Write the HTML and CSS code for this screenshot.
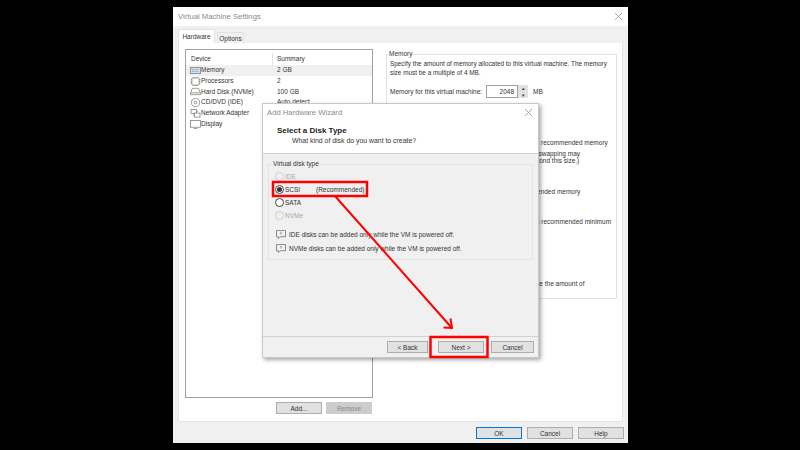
FILE: index.html
```html
<!DOCTYPE html>
<html lang="en">
  <head>
    <meta charset="UTF-8" />
    <title>Add Hardware Wizard</title>
    <link rel="stylesheet" href="styles.css">
  </head>
  <body>
    <div class="window">
      <header class="titlebar">
        <span>Virtual Machine Settings</span>
        <svg class="close" viewBox="0 0 8 8"><path d="M0 0L8 8M8 0L0 8" /></svg>
      </header>
      <nav class="tabs">
        <button class="tab valgt">Hardware</button>
        <button class="tab">Options</button>
      </nav>

      <main class="panel">
        <section class="devices">
          <div class="list">
            <div class="row head"><span class="col-device">Device</span><span class="col-sum">Summary</span></div>
            <div class="row valgt">
              <span class="col-device">
                <svg class="ico" viewBox="0 0 12 10"><rect x="0.5" y="1.5" width="11" height="7" fill="#cfe0f2" /><path d="M2 4h8M2 6h8" stroke-dasharray="1 1" /></svg>Memory
              </span>
              <span class="col-sum">2 GB</span>
            </div>
            <div class="row">
              <span class="col-device">
                <svg class="ico" viewBox="0 0 12 10"><rect x="2" y="1" width="8" height="8" rx="1" /><path d="M0.500 3h1.500M0.500 5h1.500M0.500 7h1.500M10 3h1.500M10 5h1.500M10 7h1.500M4 0v1M6 0v1M8 0v1M4 9v1M6 9v1M8 9v1" /></svg>Processors
              </span>
              <span class="col-sum">2</span>
            </div>
            <div class="row">
              <span class="col-device">
                <svg class="ico" viewBox="0 0 12 10"><path d="M2.500 1.500h7l2 5v2h-11v-2zM0.500 6.500h11" /></svg>Hard Disk (NVMe)
              </span>
              <span class="col-sum">100 GB</span>
            </div>
            <div class="row">
              <span class="col-device">
                <svg class="ico" viewBox="0 0 12 10"><circle cx="6" cy="5" r="4.500" /><circle cx="6" cy="5" r="1.500" /></svg>CD/DVD (IDE)
              </span>
              <span class="col-sum">Auto detect</span>
            </div>
            <div class="row">
              <span class="col-device">
                <svg class="ico" viewBox="0 0 12 10"><rect x="1" y="0.500" width="6" height="4.500" /><rect x="5" y="4.500" width="6" height="4.500" fill="#fff" /><path d="M3 7h2M9 2.500H7" /></svg>Network Adapter
              </span>
              <span class="col-sum"></span>
            </div>
            <div class="row">
              <span class="col-device">
                <svg class="ico" viewBox="0 0 12 10"><rect x="0.500" y="0.500" width="11" height="7.500" /><path d="M4 9.500h4" /></svg>Display
              </span>
              <span class="col-sum"></span>
            </div>
          </div>
          <div class="list-buttons">
            <button class="knap">Add...</button>
            <button class="knap off">Remove</button>
          </div>
        </section>

        <fieldset class="memory">
          <legend>Memory</legend>
          <p class="intro">Specify the amount of memory allocated to this virtual machine. The memory size must be a multiple of 4 MB.</p>
          <div class="amount">
            <span class="amount-label">Memory for this virtual machine:</span>
            <span class="spin-input">2048</span>
            <span class="spin"><i>▴</i><i>▾</i></span>
            <span class="unit">MB</span>
          </div>
          <div class="notes">
            <p class="note-max">Maximum recommended memory</p>
            <p class="note-swap">(Memory swapping may<br />occur beyond this size.)</p>
            <p class="note-rec">Recommended memory</p>
            <p class="note-min">Guest OS recommended minimum</p>
            <p class="note-end">You can reduce the amount of</p>
          </div>
        </fieldset>
      </main>

      <footer class="footer">
        <button class="knap primary">OK</button>
        <button class="knap">Cancel</button>
        <button class="knap">Help</button>
      </footer>

      <!-- wizard ligger oven paa settings vinduet -->
      <div class="wizard">
        <header class="wiz-title">
          <span>Add Hardware Wizard</span>
          <svg class="close" viewBox="0 0 8 8"><path d="M0 0L8 8M8 0L0 8" /></svg>
        </header>
        <div class="wiz-head">
          <h1>Select a Disk Type</h1>
          <p>What kind of disk do you want to create?</p>
        </div>
        <div class="wiz-body">
          <fieldset class="disk-type">
            <legend>Virtual disk type</legend>
            <div class="radio off"><span class="dot"></span>IDE</div>
            <div class="radio"><span class="dot on"></span><span class="radio-name">SCSI</span>(Recommended)</div>
            <div class="radio"><span class="dot"></span>SATA</div>
            <div class="radio off"><span class="dot"></span>NVMe</div>
            <div class="info">
              <svg class="info-ico" viewBox="0 0 11 10"><path d="M0.500 0.500h10v7h-6l-2 2v-2h-2z" /><path d="M5.500 2v3" /></svg>
              IDE disks can be added only while the VM is powered off.
            </div>
            <div class="info">
              <svg class="info-ico" viewBox="0 0 11 10"><path d="M0.500 0.500h10v7h-6l-2 2v-2h-2z" /><path d="M5.500 2v3" /></svg>
              NVMe disks can be added only while the VM is powered off.
            </div>
          </fieldset>
        </div>
        <div class="wiz-foot">
          <button class="knap back">&lt; Back</button>
          <button class="knap next">Next &gt;</button>
          <button class="knap cancel">Cancel</button>
        </div>
      </div>
    </div>

    <!-- roede markeringer -->
    <svg class="marks" viewBox="0 0 800 450">
      <rect class="box" x="273" y="182" width="94" height="14" />
      <rect class="box" x="430.500" y="337" width="57" height="20" />
      <path d="M335 196L451 327" />
      <path d="M443.500 327.500L452 328L450.500 318.500" />
    </svg>
  </body>
</html>
```

FILE: styles.css
```css
* {
  box-sizing: border-box;
}
body {
  margin: 0;
  width: 800px;
  height: 450px;
  padding: 7px 172px 7px 173px;
  background-color: #000;
  font-family: "Liberation Sans", Arial, sans-serif;
  font-size: 6.5px;
  line-height: 9px;
  color: #333;
  overflow: hidden;
}
p {
  margin: 0;
}
button {
  font: inherit;
  color: inherit;
  padding: 0;
}
.window {
  position: relative;
  height: 436px;
  display: flex;
  flex-direction: column;
  background-color: #f0f0f0;
}
.titlebar {
  height: 19px;
  flex: none;
  display: flex;
  align-items: center;
  justify-content: space-between;
  padding: 0 6px 0 5px;
  background-color: #fff;
  color: #8a8a8a;
  font-size: 7.7px;
}
.close {
  width: 7px;
  height: 7px;
  stroke: #888;
  stroke-width: 0.8;
  fill: none;
}
.tabs {
  height: 17px;
  flex: none;
  display: flex;
  align-items: flex-end;
  padding-left: 5px;
}
.tab {
  width: 27px;
  height: 11px;
  margin-left: 2px;
  border: 1px solid #e2e2e2;
  border-bottom: 0;
  background-color: #f0f0f0;
}
.tab.valgt {
  width: 37px;
  height: 14px;
  margin-left: 0;
  background-color: #fff;
}
.panel {
  height: 379px;
  flex: none;
  margin: 0 5px;
  padding: 6px 6px 0 6px;
  display: flex;
  gap: 13px;
  background-color: #fff;
  border: 1px solid #e4e4e4;
  border-width: 0 1px 1px;
}
.devices {
  width: 188px;
  flex: none;
}
.list {
  height: 349px;
  padding-top: 3px;
  border: 1px solid #a0a0a0;
}
.row {
  display: flex;
  height: 10.8px;
  line-height: 10.8px;
  padding-left: 4px;
  white-space: nowrap;
}
.row.head {
  height: 12px;
  line-height: 12px;
}
.row.valgt {
  background-color: #f0f0f0;
}
.col-device {
  width: 83px;
  flex: none;
  display: flex;
  align-items: center;
}
.head .col-device {
  padding-left: 1px;
  border-right: 1px solid #e5e5e5;
}
.col-sum {
  padding-left: 4px;
}
.ico {
  width: 11px;
  height: 9px;
  flex: none;
  fill: none;
  stroke: #777;
  stroke-width: 0.8;
}
.list-buttons {
  display: flex;
  justify-content: flex-end;
  gap: 4px;
  margin-top: 4px;
  padding-right: 1px;
}
.knap {
  width: 46px;
  height: 12px;
  line-height: 9px;
  background-color: #e1e1e1;
  border: 1px solid #adadad;
}
.knap.off {
  background-color: #ccc;
  border-color: #ccc;
  color: #888;
}
.knap.primary {
  border-color: #0078d7;
}
.memory {
  width: 231px;
  height: 248px;
  flex: none;
  margin: 2px 0 0;
  padding: 3px 3px 0;
  border: 1px solid #e2e2e2;
  min-width: 0;
}
.memory legend {
  padding: 0 1px;
  margin-left: -2px;
  line-height: 6px;
}
.intro {
  font-size: 6.4px;
  line-height: 8.5px;
}
.amount {
  display: flex;
  align-items: center;
  margin-top: 8px;
  height: 13px;
  white-space: nowrap;
}
.amount-label {
  width: 96px;
  flex: none;
}
.spin-input {
  width: 32px;
  height: 13px;
  line-height: 11px;
  text-align: right;
  padding-right: 3px;
  border: 1px solid #a0a0a0;
}
.spin {
  width: 10px;
  height: 13px;
  display: flex;
  flex-direction: column;
  background-color: #e1e1e1;
  font-size: 5px;
  line-height: 6.5px;
  text-align: center;
}
.spin i {
  font-style: normal;
}
.unit {
  margin-left: 5px;
}
.notes {
  margin: 40px 0 0 121px;
  white-space: nowrap;
}
.note-swap {
  margin-top: 3px;
  line-height: 7px;
}
.note-rec {
  margin-top: 23px;
}
.note-min {
  margin-top: 21px;
}
.note-end {
  margin: 53px 0 0 -13px;
}
.footer {
  flex: 1;
  display: flex;
  justify-content: flex-end;
  gap: 5px;
  padding: 5px 4px 0 0;
}
.wizard {
  position: absolute;
  left: 89px;
  top: 96px;
  width: 277px;
  height: 255px;
  display: flex;
  flex-direction: column;
  background-color: #f0f0f0;
  border: 1px solid #c8c8c8;
  box-shadow: 2px 2px 4px rgba(0, 0, 0, 0.35);
}
.wiz-title {
  height: 17px;
  flex: none;
  display: flex;
  align-items: center;
  justify-content: space-between;
  padding: 0 6px 0 4px;
  background-color: #fff;
  color: #8a8a8a;
  font-size: 7.7px;
}
.wiz-head {
  height: 33px;
  flex: none;
  padding: 5px 0 0 14px;
  background-color: #fff;
  border-bottom: 1px solid #d0d0d0;
}
.wiz-head h1 {
  margin: 0;
  font-size: 8px;
  line-height: 10px;
  font-weight: bold;
  color: #222;
}
.wiz-head p {
  font-size: 6.9px;
  padding-left: 15px;
}
.wiz-body {
  flex: 1;
  padding: 7px 5px 0;
  border-bottom: 1px solid #d0d0d0;
}
.disk-type {
  height: 99px;
  margin: 0;
  padding: 3px 0 0 6px;
  border: 1px solid #e3e3e3;
  min-width: 0;
}
.disk-type legend {
  padding: 0;
  margin-left: -2px;
  line-height: 6px;
}
.radio {
  height: 13px;
  display: flex;
  align-items: center;
  gap: 1px;
}
.radio.off {
  color: #a8a8a8;
}
.radio-name {
  width: 30px;
}
.dot {
  width: 9px;
  height: 9px;
  flex: none;
  display: flex;
  align-items: center;
  justify-content: center;
  border-radius: 50%;
  border: 1px solid #444;
  background-color: #fff;
}
.radio.off .dot {
  border-color: #ccc;
  background-color: #f0f0f0;
}
.dot.on::after {
  content: "";
  width: 5px;
  height: 5px;
  border-radius: 50%;
  background-color: #333;
}
.info {
  height: 14px;
  display: flex;
  align-items: center;
  gap: 3px;
  margin-left: 1px;
}
.radio + .info {
  margin-top: 5px;
}
.info-ico {
  width: 10px;
  height: 9px;
  flex: none;
  fill: none;
  stroke: #666;
  stroke-width: 0.8;
}
.wiz-foot {
  height: 20px;
  flex: none;
  display: flex;
  padding: 4px 0 0 124px;
}
.back {
  width: 41px;
}
.next {
  width: 46px;
  margin-left: 10px;
}
.cancel {
  width: 43px;
  margin-left: 7px;
}
.marks {
  position: absolute;
  left: 0;
  top: 0;
  width: 800px;
  height: 450px;
  fill: none;
  stroke: #f00;
  stroke-width: 2;
}
.box {
  stroke-width: 2.5;
}
```
